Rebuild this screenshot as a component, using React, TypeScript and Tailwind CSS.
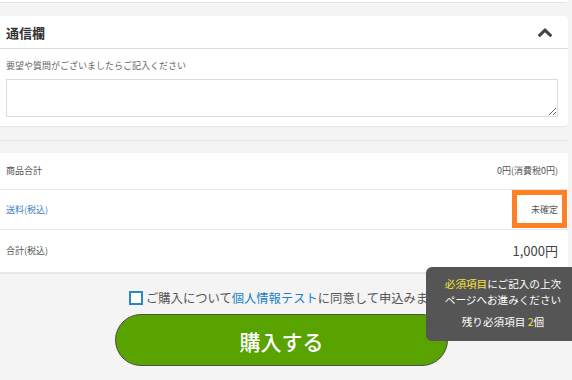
import React from "react";

const jp = { fontFamily: "'Noto Sans CJK JP', 'Noto Sans', sans-serif" };

export default function App() {
  return (
    <div
      className="relative w-[572px] h-[380px] overflow-hidden bg-[#f4f4f4] text-[#444]"
      style={jp}
    >
      <div className="w-[568px]">
        {/* previous card bottom */}
        <div className="h-[3px] bg-white border-b border-[#e2e2e2] rounded-br-[3px]" />

        {/* 通信欄 card */}
        <div className="mt-[13px] bg-white rounded-r-[4px] border-b border-[#e6e6e6]">
          <div className="h-[33px] px-[6px] flex items-center justify-between border-b border-[#dddddd]">
            <span className="text-[13px] font-bold text-[#333] leading-none">通信欄</span>
            <svg width="14" height="9" viewBox="0 0 14 9" className="mr-[10px]">
              <polyline
                points="1.8,7.2 7,2.2 12.2,7.2"
                fill="none"
                stroke="#444"
                strokeWidth="3"
                strokeLinecap="square"
              />
            </svg>
          </div>
          <div className="px-[6px] h-[77px] flex flex-col">
            <div className="mt-[12px] h-[10px] text-[9px] leading-[10px] text-[#666] whitespace-nowrap">
              要望や質問がございましたらご記入ください
            </div>
            <div className="mt-[8px] h-[38px]">
              <textarea
                className="block w-[552px] h-[38px] border border-[#dcdcdc] bg-white outline-none resize-y"
                defaultValue=""
              />
            </div>
          </div>
        </div>

        {/* divider line */}
        <div className="mt-[13px] h-px bg-[#e4e4e4]" />

        {/* totals card */}
        <div className="mt-[12px] bg-white border-b-2 border-[#e6e6e6]">
          <div className="h-[37px] px-[6px] flex items-center justify-between border-b border-[#e8e8e8]">
            <span className="text-[9px] text-[#555]">商品合計</span>
            <span className="text-[9px] text-[#555] mr-[4px]">0円(消費税0円)</span>
          </div>
          <div className="h-[40px] px-[6px] flex items-center justify-between border-b border-[#e8e8e8]">
            <span className="text-[9px] text-[#3b7cc0]">送料(税込)</span>
            <span className="text-[9px] text-[#555] mr-[4px]">未確定</span>
          </div>
          <div className="h-[42px] px-[6px] flex items-center justify-between">
            <span className="text-[9px] text-[#555]">合計(税込)</span>
            <span className="text-[13px] text-[#444] mr-[4px]">1,000円</span>
          </div>
        </div>

        {/* agreement */}
        <div className="mt-[17px] ml-[129px] flex items-center h-[14px] whitespace-nowrap">
          <span className="w-[14px] h-[14px] border-2 border-[#2a86c8] bg-white shrink-0" />
          <span className="ml-[3px] text-[12.3px] leading-[14px] text-[#555]">
            ご購入について<span className="text-[#1d7fc6]">個人情報テスト</span>に同意して申込みます
          </span>
        </div>

        {/* purchase button */}
        <div className="mt-[9px] ml-[115px]">
          <button className="w-[333px] h-[52px] rounded-full bg-[#58a300] border border-[#4d4d4d] text-white text-[21px] font-medium flex items-center justify-center pt-[4px]">
            購入する
          </button>
        </div>
      </div>

      {/* orange highlight box */}
      <div className="absolute left-[512px] top-[190px] w-[55px] h-[38px] border-[5px] border-[#fd8024]" />

      {/* tooltip */}
      <div className="absolute left-[426px] top-[267px] w-[154px] rounded-[6px] bg-[#555555] pt-[9px] pb-[11px] text-white text-center text-[10.6px] leading-[16px] whitespace-nowrap">
        <div>
          <span className="text-[#f7e33c]">必須項目</span>にご記入の上次
        </div>
        <div>ページへお進みください</div>
        <div className="mt-[6px]">
          残り必須項目 <span className="text-[#f7e33c]">2</span>個
        </div>
      </div>
    </div>
  );
}
